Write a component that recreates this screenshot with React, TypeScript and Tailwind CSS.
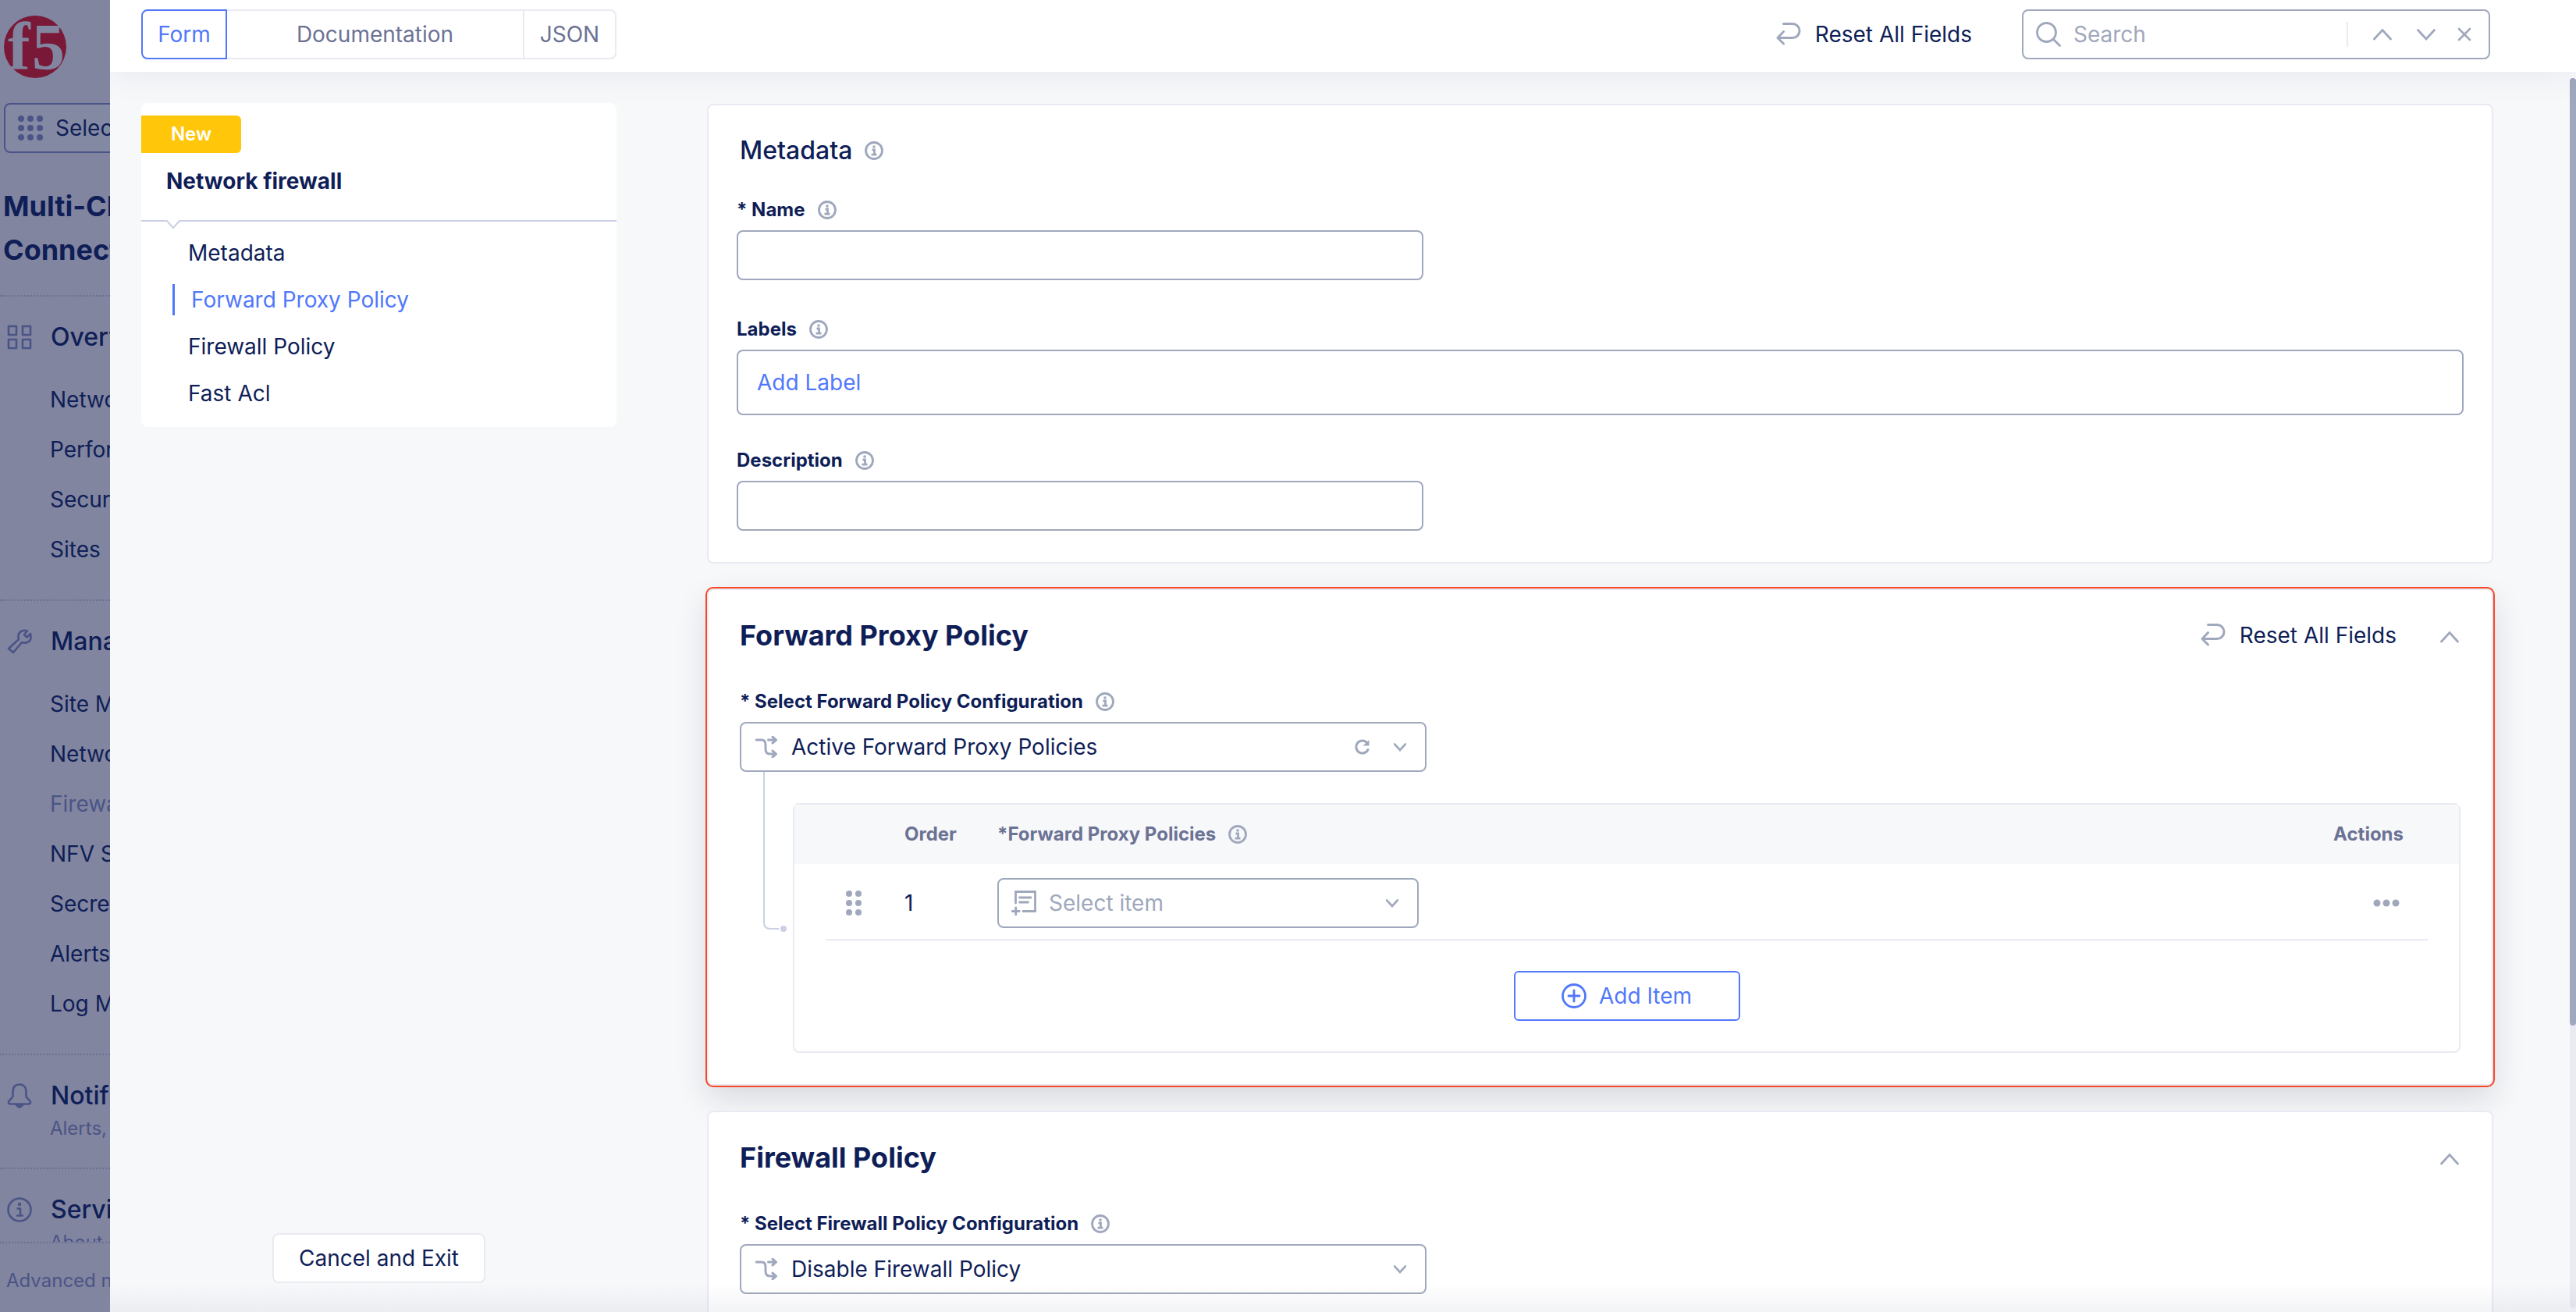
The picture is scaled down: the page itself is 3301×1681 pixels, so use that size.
import type { ReactNode } from "react";

const overviewLinks = ["Networking", "Performance", "Security", "Sites"];
const manageLinks = [
  "Site Management",
  "Networking",
  "Firewall",
  "NFV Services",
  "Secrets",
  "Alerts",
  "Log Management",
];

function InfoIcon() {
  return (
    <svg className="w-6 h-6 shrink-0" viewBox="0 0 24 24" fill="none" stroke="#9fa8bc" strokeWidth="2.8">
      <circle cx="12" cy="12" r="10.5" />
      <circle cx="12" cy="7" r="1.8" fill="#9fa8bc" stroke="none" />
      <path d="M9.5 11h3v6M8.500 17.200h7" />
    </svg>
  );
}

function ResetIcon() {
  return (
    <svg className="w-8 h-8 shrink-0" viewBox="0 0 32 32" fill="none" stroke="#9fa8bc" strokeWidth="3" strokeLinecap="round" strokeLinejoin="round">
      <path d="M9.500 2.500H21a9 9 0 0 1 0 18H2M9.500 12.500 2 20.500l7.500 7.500" />
    </svg>
  );
}

function ChevronIcon({ up = false, small = false }: { up?: boolean; small?: boolean }) {
  return (
    <svg className={small ? "w-4 h-4" : "w-6 h-6"} viewBox="0 0 24 24" fill="none" stroke="#9fa8bc" strokeWidth={small ? 4 : 2.8} strokeLinecap="round">
      <path d={up ? "M1.500 18 12 6.500 22.500 18" : "M1.500 6.500 12 18 22.500 6.500"} />
    </svg>
  );
}

function BranchIcon() {
  return (
    <svg className="w-7 h-7" viewBox="0 0 28 28" fill="none" stroke="#9fa8bc" strokeWidth="3" strokeLinecap="round" strokeLinejoin="round">
      <path d="M1 5h6.500Q13 5 13 10.500V17q0 6 6 6h7M16.500 5H26M22 1l4.500 4.200L22 9M22 19l4.500 4.200L22 27" />
    </svg>
  );
}

function NoteAddIcon() {
  return (
    <svg className="w-8 h-8" viewBox="0 0 32 32" fill="none" stroke="#9fa8bc" strokeWidth="2.800" strokeLinecap="round">
      <path d="M5.500 16V1.500h25v25H15M10.500 9H25M10.500 15h11M1.200 26.500h9M5.700 22v9" />
    </svg>
  );
}

function RefreshIcon() {
  return (
    <svg className="w-5 h-5" viewBox="0 0 20 20" fill="none" stroke="#9fa8bc" strokeWidth="3" strokeLinecap="round">
      <path d="M17 13.500A8 8 0 1 1 16 5" />
      <path d="M18.500 1v7.500h-8z" fill="#9fa8bc" stroke="none" />
    </svg>
  );
}

function SideHeading({ icon, children }: { icon: ReactNode; children: ReactNode }) {
  return (
    <h2 className="flex h-12 items-center gap-6 pl-[9px] text-[32px] font-medium leading-12">
      <svg className="w-8 h-8 shrink-0" viewBox="0 0 32 32" fill="none" stroke="#4b5487" strokeWidth="2.6" strokeLinejoin="round">
        {icon}
      </svg>
      {children}
    </h2>
  );
}

function SideLinks({ items }: { items: string[] }) {
  return (
    <ul className="pl-16">
      {items.map((item) => (
        <li key={item} className="h-16">
          <a href="#" className={item === "Firewall" ? "leading-16 text-[#4b5487]" : "leading-16"}>{item}</a>
        </li>
      ))}
    </ul>
  );
}

function Sidebar() {
  return (
    <aside className="flex w-[141px] shrink-0 flex-col overflow-hidden whitespace-nowrap bg-[#81859f]">
      <div className="min-h-0 flex-1 overflow-hidden">
        <svg className="ml-[5px] mt-5 w-20 h-20" viewBox="0 0 80 80" role="img" aria-label="F5">
          <circle cx="40" cy="40" r="40" fill="#7a1837" />
          <text x="5" y="69" fontFamily="Liberation Serif, serif" fontWeight="700" fontSize="86" fill="#81859f">f</text>
          <text x="36" y="69" fontFamily="Liberation Serif, serif" fontWeight="700" fontSize="84" fill="#81859f">5</text>
        </svg>
        <button className="ml-[5px] mt-8 flex h-16 w-[320px] items-center gap-4 rounded-lg border-2 border-[#4b5487] bg-[#8489a3] pl-4">
          <svg className="w-8 h-8" viewBox="0 0 32 32" fill="#4b5487">
            {[4, 16, 28].map((y) => [4, 16, 28].map((x) => <circle key={`${x}-${y}`} cx={x} cy={y} r="4" />))}
          </svg>
          Select
        </button>
        <h1 className="mt-10 pl-1 text-4xl font-bold leading-14">
          Multi-Cloud
          <br />
          Connect
        </h1>
        <section className="mt-[30px] border-t-2 border-dotted border-[#6b7094] pt-7 pb-8">
          <SideHeading icon={<path d="M2 2h10v11H2zM20 2h10v11H20zM2 19h10v11H2zM20 19h10v11H20z" />}>Overview</SideHeading>
          <div className="pt-6">
            <SideLinks items={overviewLinks} />
          </div>
        </section>
        <section className="border-t-2 border-dotted border-[#6b7094] pt-7 pb-8">
          <SideHeading icon={<path d="M2 25 15 13Q13 5 19 2.500q4-1.500 7 0l-4 4.500 3.500 3.500L30 6q2 8-3 10.500-4 2-8 .5L8 30z" />}>Manage</SideHeading>
          <div className="pt-6">
            <SideLinks items={manageLinks} />
          </div>
        </section>
        <section className="border-t-2 border-dotted border-[#6b7094] pt-7">
          <SideHeading icon={<path d="M16 1.500c-6 0-8.500 4-8.500 9V17L2 23.500q-.5 3 3 3h22q3.500 0 3-3L24.500 17v-6.500c0-5-2.500-9-8.500-9zM12 28h8l-4 3z" />}>
            Notifications
          </SideHeading>
          <p className="pl-16 text-2xl leading-9 text-[#4b5487]">Alerts, Audit Logs</p>
        </section>
        <section className="mt-8 border-t-2 border-dotted border-[#6b7094] pt-7">
          <SideHeading
            icon={
              <>
                <circle cx="16" cy="16" r="14.500" />
                <circle cx="16" cy="9" r="1" />
                <path d="M12.500 14.500H17V23M12 23.500h9" />
              </>
            }
          >
            Service Info
          </SideHeading>
          <p className="pl-16 text-2xl leading-9 text-[#4b5487]">About</p>
        </section>
      </div>
      <div className="h-[90px] border-t-2 border-dotted border-[#6b7094] pl-2 pt-7 text-2xl leading-10 text-[#4b5487]">
        Advanced nav options visible
      </div>
    </aside>
  );
}

function ResetButton() {
  return (
    <button className="flex items-center gap-[18px] whitespace-nowrap">
      <ResetIcon />
      Reset All Fields
    </button>
  );
}

function TopBar() {
  return (
    <header className="z-10 flex h-[92px] shrink-0 items-center bg-white pb-1 pl-10 pr-[110px] shadow-[0_0_48px_rgba(15,30,87,0.08)]">
      <div className="flex h-16 w-[609px] text-[#6b7294]">
        <button className="w-[110px] rounded-l-lg border-2 border-[#5178fb] text-[#5178fb]">Form</button>
        <button className="flex-1 border-y-2 border-[#e9eaf2]">Documentation</button>
        <button className="w-30 rounded-r-lg border-2 border-[#e9eaf2]">JSON</button>
      </div>
      <div className="ml-auto mr-16">
        <ResetButton />
      </div>
      <div className="flex h-16 w-[600px] items-center rounded-lg border-2 border-[#9fa8bc] pl-4 pr-[22px]">
        <svg className="w-8 h-8 shrink-0" viewBox="0 0 32 32" fill="none" stroke="#9fa8bc" strokeWidth="2.800" strokeLinecap="round">
          <circle cx="13.500" cy="13.500" r="12" />
          <path d="m22 22 8.500 8.500" />
        </svg>
        <input aria-label="Search" placeholder="Search" className="min-w-0 flex-1 bg-transparent pl-4 outline-none placeholder:text-[#9fa8bc]" />
        <div className="flex h-8 items-center gap-8 border-l-2 border-[#e9eaf2] pl-8">
          <button aria-label="Previous match"><ChevronIcon up /></button>
          <button aria-label="Next match"><ChevronIcon /></button>
          <button aria-label="Clear search" className="-ml-1">
            <svg className="w-[18px] h-[18px]" viewBox="0 0 18 18" stroke="#9fa8bc" strokeWidth="2.600" strokeLinecap="round">
              <path d="m2 2 14 14M16 2 2 16" />
            </svg>
          </button>
        </div>
      </div>
    </header>
  );
}

function FormNav() {
  return (
    <div className="flex w-[609px] shrink-0 flex-col items-center justify-between pb-[37px] pt-10">
      <nav className="w-full rounded-lg bg-white pt-4">
        <span className="flex h-12 w-32 items-center justify-center rounded-r-md bg-[#ffc60a] text-2xl font-semibold text-white">New</span>
        <h2 className="mt-4 pb-[30px] pl-8 font-bold leading-10">Network firewall</h2>
        <svg className="block h-3 w-full" fill="none" stroke="#cbd0e6" strokeWidth="2">
          <path d="M0 1h33l8 9 8-9h560" />
        </svg>
        <ul className="pb-[13px]">
          <li className="flex h-15 items-center pl-[60px]"><a href="#metadata">Metadata</a></li>
          <li className="flex h-15 items-center pl-10">
            <a href="#forward-proxy" className="border-l-[3px] border-[#5178fb] pl-[21px] leading-10 text-[#5178fb]">Forward Proxy Policy</a>
          </li>
          <li className="flex h-15 items-center pl-[60px]"><a href="#firewall">Firewall Policy</a></li>
          <li className="flex h-15 items-center pl-[60px]"><a href="#fast-acl">Fast Acl</a></li>
        </ul>
      </nav>
      <button className="h-16 rounded-lg border-2 border-[#e9eaf2] bg-white px-8">Cancel and Exit</button>
    </div>
  );
}

function FieldLabel({ htmlFor, children }: { htmlFor: string; children: ReactNode }) {
  return (
    <div className="mb-[10px] flex h-8 items-center gap-4">
      <label htmlFor={htmlFor} className="text-2xl font-bold">{children}</label>
      <InfoIcon />
    </div>
  );
}

function PolicySelect({ id, value, refresh = false }: { id: string; value: string; refresh?: boolean }) {
  return (
    <div className="relative w-[880px]">
      <select id={id} className="h-16 w-full appearance-none rounded-lg border-2 border-[#9fa8bc] bg-white pl-16 outline-none">
        <option>{value}</option>
      </select>
      <div className="pointer-events-none absolute inset-y-0 left-5 flex items-center"><BranchIcon /></div>
      <div className="pointer-events-none absolute inset-y-0 right-[26px] flex items-center gap-[30px]">
        {refresh && <RefreshIcon />}
        <ChevronIcon small />
      </div>
    </div>
  );
}

function PoliciesTable() {
  return (
    <div className="rounded-lg border-2 border-[#e9eaf2]">
      <table className="w-full text-left">
        <thead>
          <tr className="h-[76px] bg-[#f7f8fa] text-2xl text-[#6b7294]">
            <th className="w-[141px]" aria-label="Drag handle"></th>
            <th className="w-[119px] font-bold">Order</th>
            <th className="font-bold">
              <span className="flex items-center gap-4">*Forward Proxy Policies <InfoIcon /></span>
            </th>
            <th className="pr-[71px] text-right font-bold">Actions</th>
          </tr>
        </thead>
        <tbody>
          <tr className="h-24">
            <td className="pl-[66px] pt-1">
              <svg className="h-8 w-5" viewBox="0 0 20 32" fill="#9fa8bc">
                {[4, 16, 28].map((y) => [4, 16].map((x) => <circle key={`${x}-${y}`} cx={x} cy={y} r="4" />))}
              </svg>
            </td>
            <td className="pt-1">1</td>
            <td className="pt-1">
              <div className="relative w-[540px]">
                <select aria-label="Forward Proxy Policies" className="h-16 w-full appearance-none rounded-lg border-2 border-[#9fa8bc] bg-white pl-16 text-[#9fa8bc] outline-none">
                  <option>Select item</option>
                </select>
                <div className="pointer-events-none absolute inset-y-0 left-[18px] flex items-center"><NoteAddIcon /></div>
                <div className="pointer-events-none absolute inset-y-0 right-[26px] flex items-center"><ChevronIcon small /></div>
              </div>
            </td>
            <td className="pr-[76px] pt-1">
              <button aria-label="Row actions" className="ml-auto block">
                <svg className="h-[10px] w-[34px]" viewBox="0 0 34 10" fill="#9fa8bc">
                  <circle cx="5" cy="5" r="4.500" />
                  <circle cx="17" cy="5" r="4.500" />
                  <circle cx="29" cy="5" r="4.500" />
                </svg>
              </button>
            </td>
          </tr>
        </tbody>
      </table>
      <div className="mx-10 flex justify-center border-t-2 border-[#e9eaf2] py-[39px]">
        <button className="flex h-16 w-[290px] items-center justify-center gap-4 rounded-md border-2 border-[#5178fb] text-[#5178fb]">
          <svg className="w-8 h-8" viewBox="0 0 32 32" fill="none" stroke="#5178fb" strokeWidth="2.800" strokeLinecap="round">
            <circle cx="16" cy="16" r="14.500" />
            <path d="M16 9v14M9 16h14" />
          </svg>
          Add Item
        </button>
      </div>
    </div>
  );
}

export default function App() {
  return (
    <div className="flex h-screen overflow-hidden bg-[#f7f8fa] font-['Inter',sans-serif] text-[28px] leading-10 text-[#0f1e57]">
      <Sidebar />
      <div className="relative flex min-w-0 flex-1 flex-col overflow-hidden">
        <TopBar />
        <div className="flex min-h-0 flex-1 pl-10">
          <FormNav />
          <main className="ml-29 mr-[98px] min-w-0 flex-1 pt-[41px]">
            <section id="metadata" className="rounded-lg border-2 border-[#e9eaf2] bg-white pb-10 pl-9 pr-9 pt-9">
              <h2 className="flex items-center gap-4 pl-1 pt-[2px] text-[32px] font-medium leading-10">Metadata <InfoIcon /></h2>
              <div className="mt-10">
                <FieldLabel htmlFor="name">* Name</FieldLabel>
                <input id="name" className="block h-16 w-[880px] rounded-lg border-2 border-[#9fa8bc] px-5 outline-none" />
              </div>
              <div className="mt-[47px]">
                <FieldLabel htmlFor="labels">Labels</FieldLabel>
                <button id="labels" className="block h-[84px] w-full rounded-lg border-2 border-[#9fa8bc] px-6 text-left text-[#5178fb]">Add Label</button>
              </div>
              <div className="mt-[42px]">
                <FieldLabel htmlFor="description">Description</FieldLabel>
                <input id="description" className="block h-16 w-[880px] rounded-lg border-2 border-[#9fa8bc] px-5 outline-none" />
              </div>
            </section>

            <section id="forward-proxy" className="mt-8 rounded-lg border-2 border-[#e9eaf2] bg-white px-10 pb-10 pt-9 shadow-[0_0_0_2px_#f94627,0_16px_40px_rgba(20,25,50,0.14)]">
              <div className="flex h-11 items-center">
                <h2 className="text-4xl font-bold leading-11">Forward Proxy Policy</h2>
                <div className="ml-auto mr-14"><ResetButton /></div>
                <button aria-label="Collapse Forward Proxy Policy" className="mt-1 mr-[2px]"><ChevronIcon up /></button>
              </div>
              <div className="mt-[47px]">
                <FieldLabel htmlFor="forward-config">* Select Forward Policy Configuration</FieldLabel>
                <PolicySelect id="forward-config" value="Active Forward Proxy Policies" refresh />
              </div>
              <div className="flex">
                <svg className="h-[208px] w-17 shrink-0" viewBox="0 0 68 208" fill="none">
                  <path d="M31 0v193q0 8 8 8h11" stroke="#cbd0e6" strokeWidth="2" />
                  <circle cx="56" cy="201" r="4" fill="#cbd0e6" />
                </svg>
                <div className="mt-10 min-w-0 flex-1"><PoliciesTable /></div>
              </div>
            </section>

            <section id="firewall" className="mt-8 rounded-lg border-2 border-[#e9eaf2] bg-white px-10 pb-10 pt-9">
              <div className="flex h-11 items-center justify-between">
                <h2 className="text-4xl font-bold leading-11">Firewall Policy</h2>
                <button aria-label="Collapse Firewall Policy" className="mt-1 mr-[2px]"><ChevronIcon up /></button>
              </div>
              <div className="mt-[47px]">
                <FieldLabel htmlFor="firewall-config">* Select Firewall Policy Configuration</FieldLabel>
                <PolicySelect id="firewall-config" value="Disable Firewall Policy" />
              </div>
            </section>
          </main>
          {/* scroll track */}
          <div className="mb-[5px] mt-2 w-2 shrink-0 rounded-full bg-[#e9eaf2]">
            <div className="h-[77%] rounded-full bg-[#9fa8bc]"></div>
          </div>
        </div>
        <div className="pointer-events-none absolute inset-x-0 bottom-0 h-9 bg-linear-to-b from-transparent to-[#0f1e57]/5"></div>
      </div>
    </div>
  );
}
